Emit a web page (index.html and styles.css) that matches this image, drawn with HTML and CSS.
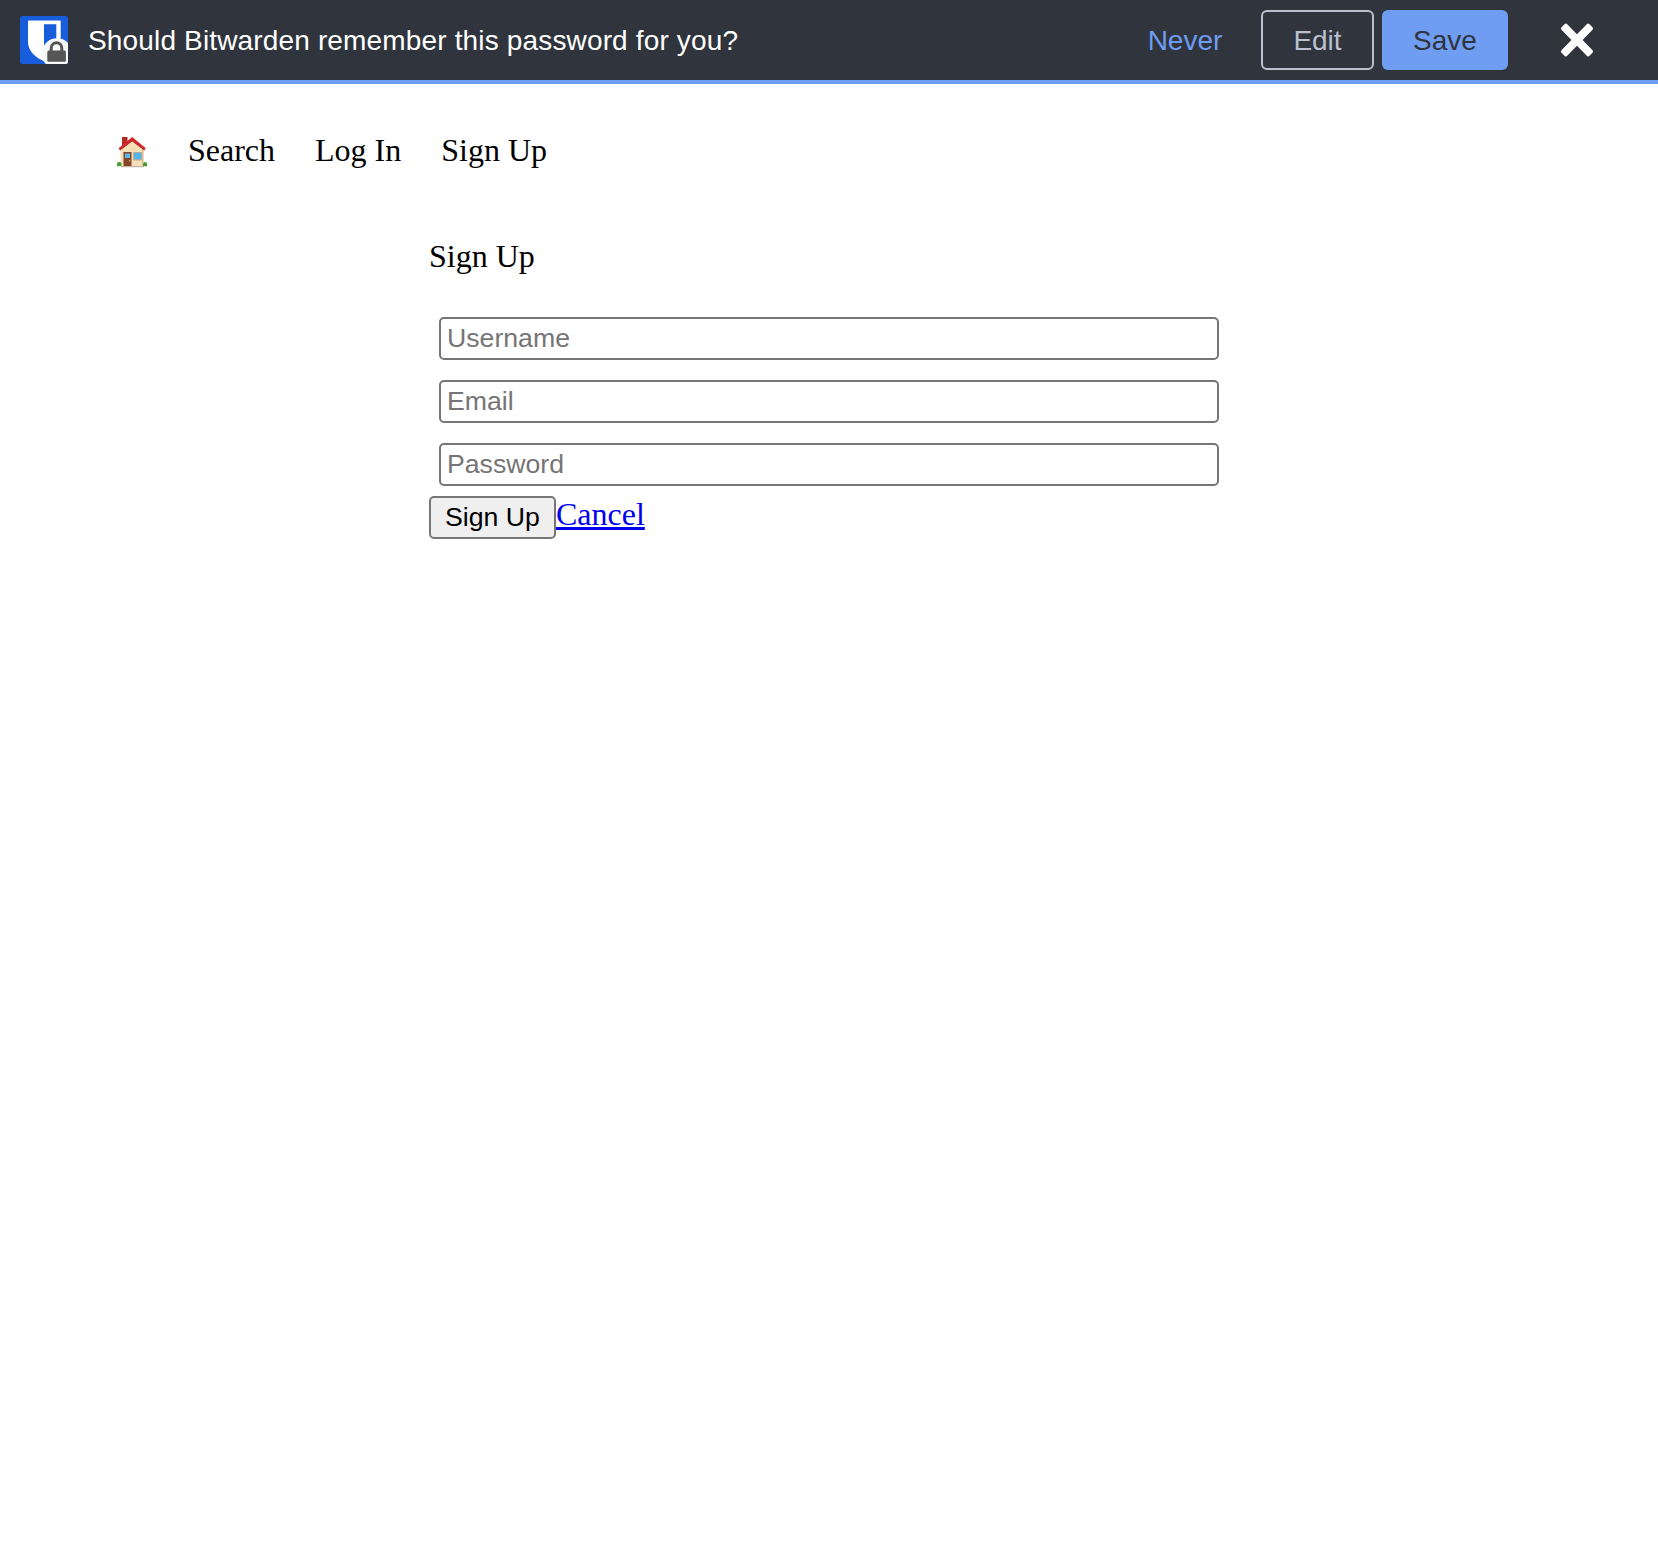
FILE: index.html
```html
<!DOCTYPE html>
<html lang="en">
<head>
<meta charset="utf-8">
<title>Sign Up</title>
<link rel="stylesheet" href="styles.css">
</head>
<body>
<div class="bar">
  <svg class="logo" viewBox="0 0 48 48" aria-hidden="true">
    <defs><clipPath id="tile"><rect width="48" height="48" rx="2.5"/></clipPath></defs>
    <g clip-path="url(#tile)">
      <rect width="48" height="48" fill="#175ddc"/>
      <path fill="#fff" d="M9 4.500H39.700q1 0 1 1V26c0 10-9 16.500-16.300 19.500C17 42 8 36 8 26V5.500q0-1 1-1z"/>
      <path fill="#175ddc" d="M24 8.300h12.300V26c0 5-6 10-12.300 13.500z"/>
      <circle cx="37" cy="37.500" r="15.300" fill="#f7f8f9"/>
      <path fill="none" stroke="#555" stroke-width="3" d="M31.200 35.500V32a5.300 5.300 0 0 1 10.600 0V35.500"/>
      <rect x="27.300" y="34.500" width="18.600" height="11.300" rx="1.500" fill="#555"/>
    </g>
  </svg>
  <div class="message">Should Bitwarden remember this password for you?</div>
  <button class="btn never" type="button">Never</button>
  <button class="btn edit" type="button">Edit</button>
  <button class="btn save" type="button">Save</button>
  <button class="close" type="button" aria-label="Close">
    <svg viewBox="0 0 34 34" width="34" height="34"><g fill="#fff" transform="translate(17 17)"><rect x="-20" y="-4" width="40" height="8" rx="1.800" transform="rotate(46)"/><rect x="-20" y="-4" width="40" height="8" rx="1.800" transform="rotate(-46)"/></g></svg>
  </button>
</div>
<nav class="nav">
  <a href="#" aria-label="Home">
    <svg class="home" viewBox="0 0 32 32">
      <rect x="5" y="29.500" width="23" height="1.700" rx=".8" fill="#c5b4a0"/>
      <path d="M6 1h5.500v9L6 13z" fill="#b52828"/>
      <path d="M4.500 13L16.200 4l11.300 9v16.800h-23z" fill="#f5dfb7"/>
      <path d="M26 14h1.500v15.500H26z" fill="#d9be96"/>
      <path d="M2.500 12.300L16.200 1 29.800 12.300l-1.400 1.900L16.200 4.900 4 14.200z" fill="#d9262b"/>
      <path d="M4 14.200L16.200 4.900l12.200 9.300" fill="none" stroke="#8b1c20" stroke-width=".7"/>
      <rect x="7.500" y="16" width="8" height="14" fill="#84442b"/>
      <rect x="9" y="17.500" width="5" height="4.500" fill="#58b9ee"/>
      <circle cx="13.700" cy="24.800" r=".7" fill="#efc34d"/>
      <rect x="17" y="16" width="9" height="8.500" fill="#c6ab91"/>
      <rect x="18" y="16.800" width="7.300" height="6.500" fill="#55b4e9"/>
      <path d="M1 30.300c0-2.500 0-4.300 2.300-4.300S5.500 28 5.500 30.300zM27 30.300c0-2.300 0-4.300 2-4.300s2.200 2 2.200 4.300z" fill="#4e9b31"/>
    </svg>
  </a>
  <a href="#">Search</a>
  <a href="#">Log In</a>
  <a href="#">Sign Up</a>
</nav>
<main class="panel">
  <div class="title">Sign Up</div>
  <form class="form">
    <input class="field" type="text" placeholder="Username">
    <input class="field" type="email" placeholder="Email">
    <input class="field" type="password" placeholder="Password">
    <div class="actions">
      <button class="submit" type="button">Sign Up</button>
      <a class="cancel" href="#">Cancel</a>
    </div>
  </form>
</main>
</body>
</html>
```
FILE: styles.css
```css
* { box-sizing: border-box; }
body {
  margin: 0;
  background: #fff;
  color: #000;
  font: 32px/37px "Liberation Serif", "Times New Roman", serif;
}
.bar {
  display: flex;
  align-items: center;
  height: 84px;
  padding: 0 64px 0 20px;
  background: #2f343d;
  border-bottom: 4px solid #6f9df1;
  font: 28px/32px "Liberation Sans", Helvetica, Arial, sans-serif;
}
.logo { width: 48px; height: 48px; margin-right: 20px; }
.message {
  flex: 1;
  padding-top: 2px;
  color: #fff;
  letter-spacing: 0.155px;
  white-space: nowrap;
}
.btn {
  height: 60px;
  padding: 2px 0 0;
  border: 0;
  border-radius: 6px;
  background: none;
  font: inherit;
}
.never { width: 78px; margin-right: 37px; color: #6f9df1; }
.edit { width: 113px; margin-right: 8px; border: 2px solid #bac0ce; color: #bac0ce; }
.save { width: 126px; margin-right: 52px; background: #6f9df1; color: #2f343d; }
.close { display: flex; padding: 0; border: 0; background: none; }
.nav {
  display: flex;
  gap: 40px;
  padding: 48px 116px 0;
}
.nav a { color: inherit; text-decoration: none; }
.home { display: block; width: 32px; height: 32px; margin-top: 4px; }
.panel { width: 800px; margin: 69px auto 0; }
.title { margin-bottom: 32px; }
.form { display: flex; flex-direction: column; }
.field {
  height: 43px;
  margin: 10px;
  padding: 2px 6px;
  border: 2px solid #767676;
  border-radius: 5px;
  background: #fff;
  font: 26.667px "Liberation Sans", Arial, sans-serif;
}
.field::placeholder { color: #757575; }
.actions { display: flex; align-items: flex-start; }
.submit {
  width: 127px;
  height: 43px;
  padding: 0;
  border: 2px solid #767676;
  border-radius: 5px;
  background: #efefef;
  color: #000;
  font: 26.667px "Liberation Sans", Arial, sans-serif;
}
.cancel {
  color: #0000ee;
  text-decoration-thickness: 3px;
  text-underline-offset: 2px;
}
```
